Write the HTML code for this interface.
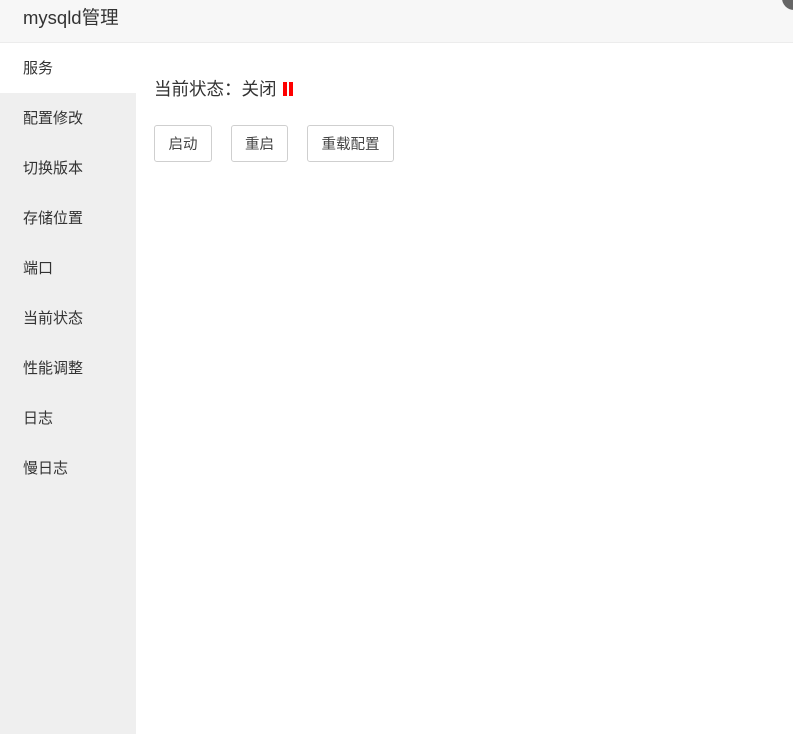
<!DOCTYPE html>
<html><head><meta charset="utf-8"><style>
*{margin:0;padding:0;box-sizing:border-box}
body{width:793px;height:734px;overflow:hidden;background:#fff;font-family:"Liberation Sans","Noto Sans CJK SC",sans-serif;color:#333;position:relative}
.hd{position:absolute;left:0;top:0;width:793px;height:43px;background:#f7f7f7;border-bottom:1px solid #ececec}
.hd span{position:absolute;left:23px;top:4px;font-size:18.5px;color:#333}
.circ{position:absolute;left:782px;top:-14px;width:24px;height:24px;border-radius:50%;background:#666}
.sb{position:absolute;left:0;top:43px;width:136px;height:691px;background:#efefef}
.sb div{height:50px;line-height:52px;padding-left:23px;font-size:15px;color:#333}
.sb div.on{background:#fff}
.st{position:absolute;left:154px;top:76px;font-size:17.5px;color:#333}
.bar{display:inline-block;width:4px;height:14px;background:#f00;margin-left:2px;vertical-align:-1px}
.btn{position:absolute;top:125px;height:37px;border:1px solid #cfcfcf;border-radius:3px;font-size:14.5px;line-height:38px;text-align:center;color:#444;background:#fff}
</style></head><body>
<div class="hd"><span>mysqld管理</span></div>
<div class="circ"></div>
<div class="sb">
<div class="on">服务</div><div>配置修改</div><div>切换版本</div><div>存储位置</div><div>端口</div><div>当前状态</div><div>性能调整</div><div>日志</div><div>慢日志</div>
</div>
<div class="st">当前状态：关闭 <span class="bar"></span><span class="bar"></span></div>
<div class="btn" style="left:154px;width:58px">启动</div>
<div class="btn" style="left:231px;width:57px">重启</div>
<div class="btn" style="left:307px;width:87px">重载配置</div>
</body></html>
